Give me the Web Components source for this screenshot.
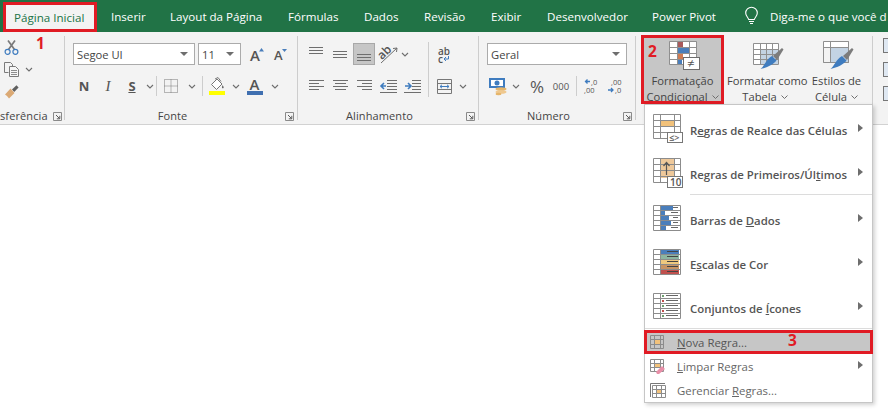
<!DOCTYPE html>
<html lang="pt-BR">
<head>
<meta charset="utf-8">
<title>Formatação Condicional</title>
<style>
html,body{margin:0;padding:0;background:#fff;overflow:hidden;width:888px;height:418px}
body{font-family:"Open Sans","Liberation Sans",sans-serif;font-size:11px;color:#444}
</style>
</head>
<body>
<excel-app></excel-app>
<script>
const svg=(w,h,b)=>`<svg xmlns="http://www.w3.org/2000/svg" width="${w}" height="${h}" viewBox="0 0 ${w} ${h}" style="display:block;overflow:visible">${b}</svg>`;
const lines=(a,c='#6e6e6e')=>`<path fill="none" stroke="${c}" d="${a.map(l=>`M${l[0]} ${l[1]+.5}H${l[2]}`).join('')}"/>`;
const grid=(x,y,w,h,cols,rows,c='#8c8c8c')=>{let d=`M${x+.5} ${y+.5}h${w}v${h}h${-w}z`;cols.forEach(v=>d+=`M${x+v+.5} ${y+.5}v${h}`);rows.forEach(v=>d+=`M${x+.5} ${y+v+.5}h${w}`);return `<path d="${d}" fill="none" stroke="${c}"/>`};
const txt=(x,y,s,t,extra='')=>`<text x="${x}" y="${y}" font-family="'Open Sans',sans-serif" font-size="${s}" fill="#555" ${extra}>${t}</text>`;
const BR='<path d="M20 15L29 7l1.500 1.500L24 19z" fill="#7c7c7c"/><path d="M19 15l4.500 4.500c-3 4-9 7-16 8.500 4-3 5-9 11.500-13z" fill="#3f7cbf"/>';
const ICONS={
 chev:svg(8,5,'<path d="M1 1l3 3 3-3" fill="none" stroke="#6e6e6e" stroke-width="1.1"/>'),
 cut:svg(15,15,'<path d="M4.500 9.500L11 .5M10.500 9.500L4 .5" stroke="#7a7a7a" stroke-width="1.7" fill="none"/><circle cx="3.600" cy="11.800" r="2.500" fill="none" stroke="#3f7cbf" stroke-width="1.2"/><circle cx="11.400" cy="11.800" r="2.500" fill="none" stroke="#3f7cbf" stroke-width="1.2"/>'),
 copy:svg(16,15,'<path d="M.5 .5h6l2 2v1.500M.5 .5v10h4" fill="none" stroke="#7a7a7a"/><path d="M5.500 4.500h6l3 3v7h-9z" fill="#f6f6f6" stroke="#7a7a7a"/>'+lines([[7,8,13],[7,10,13],[7,12,13]],'#8d8d8d')),
 brush:svg(15,15,'<path d="M8 5.500L12.500 1.200 14.600 3.400 10.200 8z" fill="#5f5f5f"/><path d="M1 10.500L6.500 4.500 10.500 9 5 14.500 3 12z" fill="#dba974"/>'),
 aup:svg(14,15,txt(0,14,15,'A','font-weight="600"')+'<path d="M9 4.500L11.500 1 14 4.500z" fill="#4a7ebb"/>'),
 adn:svg(13,13,txt(0,12,13,'A','font-weight="600"')+'<path d="M8 1h5l-2.500 3z" fill="#4a7ebb"/>'),
 border:svg(14,14,'<path d="M.5 .5h13v13H.5zM7 .5v13M.5 7h13" fill="none" stroke="#777" stroke-dasharray="1 1"/>'),
 fill:svg(16,18,'<path d="M2.500 7.500L8 2l5 5-5.500 5.500z" fill="#fff" stroke="#777"/><path d="M6 2l3-1.500 3 4" fill="none" stroke="#777"/><path d="M13.500 8c1 1.500 1.500 2.200 1 3-.8.6-1.800 0-1.500-1z" fill="#666"/><rect x="0" y="14" width="16" height="4" fill="#ffff00"/>'),
 fcolor:svg(16,18,txt(2.500,13,15,'A','font-weight="600"')+'<rect y="14" width="16" height="4" fill="#3f6fb0"/>'),
 atop:svg(14,8,lines([[0,1,14],[0,4,14],[0,7,14]])),
 amid:svg(14,8,lines([[0,1,14],[0,4,14],[0,7,14]])),
 abot:svg(14,8,lines([[0,1,14],[0,4,14],[0,7,14]])),
 orient:svg(20,19,'<g transform="rotate(-45 9 9)">'+txt(1,10,12,'ab','font-weight="600"')+'</g><path d="M3 18L19 3M19 3l-4 .5M19 3l-.5 4" stroke="#6e6e6e" fill="none"/>'),
 left:svg(15,12,lines([[0,0,15],[0,3,10],[0,6,15],[0,9,10]])),
 center:svg(15,12,lines([[0,0,15],[2,3,13],[0,6,15],[2,9,13]])),
 right:svg(15,12,lines([[0,0,15],[5,3,15],[0,6,15],[5,9,15]])),
 outd:svg(17,13,lines([[7,0,17],[7,3,17],[7,6,17],[7,9,17],[0,12,17]])+'<path d="M6 6H1.500M4 3L1 6l3 3" fill="none" stroke="#3f7cbf" stroke-width="1.6"/>'),
 ind:svg(17,13,lines([[8,0,17],[8,3,17],[8,6,17],[8,9,17],[0,12,17]])+'<path d="M1 6h5.500M4 3l3 3-3 3" fill="none" stroke="#3f7cbf" stroke-width="1.6"/>'),
 wraparrow:svg(13,16,'<path d="M12.500 10v3H8M10 11l-2 2 2 2" fill="none" stroke="#3f7cbf"/>'),
 merge:svg(15,15,'<path d="M.5 .5h14v14H.5zM.5 4.500h14M.5 10.500h14" fill="none" stroke="#777"/><path d="M3 7.500h9M5 5.800L3 7.500l2 1.700M10 5.800l2 1.700-2 1.700" fill="none" stroke="#3f7cbf"/>'),
 money:svg(18,17,'<rect x="0" y="0" width="16" height="10" fill="#3f7cbf"/><rect x="2" y="2" width="12" height="6" fill="#fff"/><circle cx="8" cy="5" r="2.500" fill="#3f7cbf"/><ellipse cx="12" cy="11" rx="5.500" ry="1.800" fill="#e5b56a"/><ellipse cx="12" cy="14" rx="5.500" ry="1.800" fill="#efc88e"/><ellipse cx="9.500" cy="16" rx="3" ry="1.200" fill="#e5b56a"/>'),
 incarrow:svg(16,16,'<path d="M6 3.500H1.500M3.500 1.500l-2 2 2 2" fill="none" stroke="#3f7cbf" stroke-width="1.3"/>'),
 decarrow:svg(16,16,'<path d="M0 12h4.500M3 10l2 2-2 2" fill="none" stroke="#3f7cbf" stroke-width="1.3"/>'),
 launcher:svg(9,9,'<path d="M.5 8.500V.5h8v8z" fill="none" stroke="#8a8a8a"/><path d="M3 3l3.500 3.500M6.800 3.800v3h-3" fill="none" stroke="#5a5a5a"/>'),
 bulb:svg(13,18,'<path d="M3.700 12.500C3.300 10.500 .7 9.200 .7 6a5.800 5.800 0 0 1 11.600 0c0 3.200-2.600 4.500-3 6.500z M4 14.500h5M5 16.500h3" fill="none" stroke="#fff" stroke-width="1.1"/>'),
 condfmt:svg(31,29,'<rect x="1" y="1" width="27" height="23" fill="#fff"/><rect x="8" y="1" width="6" height="6" fill="#a9595a"/><rect x="8" y="7" width="12" height="6" fill="#4a7ebb"/><rect x="8" y="13" width="6" height="6" fill="#d07b52"/><rect x="8" y="19" width="5" height="5" fill="#4a7ebb"/>'+grid(0,0,27,23,[8,20],[6,12,18],'#8f8f8f')+'<rect x="14.500" y="16.500" width="16" height="12" fill="#fff" stroke="#6e6e6e"/>'+txt(18,27,13,'≠')),
 tablefmt:svg(31,29,'<rect x="1" y="3" width="25" height="21" fill="#fff"/><rect x="7" y="8" width="19" height="15" fill="#c3d3e3"/>'+grid(0,2,25,21,[7,13,19],[6,11,16],'#8f8f8f')+BR),
 stylefmt:svg(31,29,'<rect x="7" y="7" width="18" height="14" fill="#c3d3e3"/><rect x="1" y="1" width="25" height="5" fill="#fff"/>'+grid(0,0,25,21,[7,25],[6,21],'#8f8f8f')+BR),
 m1:svg(30,29,'<rect x="7" y="6" width="14" height="6" fill="#f2c27b"/>'+grid(0,0,27,24,[7,21],[6,12,18])+'<rect x="14.500" y="18.500" width="15" height="10" fill="#fff" stroke="#777"/>'+txt(16,27,9,'≤&gt;')),
 m2:svg(30,30,'<rect x="7" y="1" width="14" height="19" fill="#eec89a"/>'+grid(0,0,27,24,[7,21],[6,12,18])+'<path d="M13.500 17V5M10.500 8l3-3.500 3 3.500" fill="none" stroke="#555" stroke-width="1.2"/><rect x="14.500" y="18.500" width="15" height="11" fill="#fff" stroke="#777"/>'+txt(17,27.500,10,'10')),
 m3:svg(28,26,'<rect x="7" y="1" width="13" height="5" fill="#4a7ebb"/><rect x="7" y="6" width="5" height="5" fill="#4a7ebb"/><rect x="7" y="11" width="9" height="5" fill="#4a7ebb"/><rect x="7" y="16" width="11" height="5" fill="#4a7ebb"/><rect x="7" y="21" width="6" height="4" fill="#4a7ebb"/>'+grid(0,0,27,25,[7],[5,10,15,20])+lines([[20,2,25],[18,7,25],[20,12,25],[20,17,25],[18,22,25]],'#666')),
 m4:svg(28,26,'<rect x="7" y="1" width="19" height="5" fill="#4a7ebb"/><rect x="7" y="6" width="19" height="5" fill="#8cb5a0"/><rect x="7" y="11" width="19" height="5" fill="#eec87e"/><rect x="7" y="16" width="19" height="4" fill="#c89464"/><rect x="7" y="20" width="19" height="5" fill="#c0504d"/>'+grid(0,0,27,25,[7],[5,10,15,20])+lines([[14,2,25],[14,7,25],[14,12,25],[14,17,25],[14,22,25]],'#444')),
 m5:svg(28,26,grid(0,0,27,25,[7],[5,10,15,20])+lines([[13,2,25],[13,7,25],[13,12,25],[13,17,25],[13,22,25]],'#666')+'<rect x="9" y="2" width="2" height="2" fill="#6fa06f"/><rect x="9" y="7" width="2" height="2" fill="#c0504d"/><rect x="9" y="12" width="2" height="2" fill="#6fa06f"/><rect x="9" y="17" width="2" height="2" fill="#c0504d"/><rect x="9" y="22" width="2" height="2" fill="#6fa06f"/>'),
 s1:svg(14,14,'<rect x="4" y="4" width="6" height="5" fill="#f2c27b"/>'+grid(0,0,13,13,[4,10],[4,9])),
 s2:svg(16,16,'<rect x="4" y="4" width="6" height="5" fill="#f2c27b"/>'+grid(0,0,13,12,[4,10],[4,8])+'<path d="M6 13l6-6 3 3-6 5H7z" fill="#e88fa8"/>'),
 s3:svg(16,15,'<path d="M.5 14V.5H15" fill="none" stroke="#777"/><rect x="6" y="6" width="5" height="4" fill="#f2c27b"/>'+grid(2,2,13,12,[4,9],[4,8]))
};
function el(name,css,html,init){
 customElements.define(name,class extends HTMLElement{
  connectedCallback(){
   if(this.shadowRoot)return;
   const r=this.attachShadow({mode:'open'});
   const a=n=>this.getAttribute(n);
   r.innerHTML=`<style>${css}</style>`+(typeof html==='function'?html(a):html);
   if(init)init(this,a);
  }
 });
}
el('x-row',':host{display:flex;align-items:center;height:22px}','<slot></slot>');
el('x-col',':host{display:flex;flex-direction:column;gap:10px;padding-top:11px}','<slot></slot>');
el('x-sep',':host{display:block;width:1px;height:20px;background:#cdcdcd;flex:none}','');
el('x-tool',`:host{display:flex;align-items:center;justify-content:center;height:22px;flex:none;box-sizing:border-box;font:inherit;color:#555}`,
 a=>`${a('icon')?ICONS[a('icon')]:''}<slot></slot>`,(t,a)=>{if(a('w'))t.style.width=a('w')+'px'});
/* icon whose glyph lines are one wrapped text, with a small arrow drawn over them */
el('x-glyph',`:host{display:block;position:relative;width:16px;height:16px;flex:none;color:#555}
 .t{display:block;white-space:pre;margin:0}
 .o{position:absolute;left:0;top:0}`,
 a=>`<span class="t" style="${a('ts')}">${a('text').replace(/\|/g,'\n')}</span><span class="o">${ICONS[a('icon')]}</span>`);
el('x-combo',`:host{display:flex;align-items:center;justify-content:space-between;box-sizing:border-box;height:22px;background:#fff;border:1px solid #ababab;padding:0 4px 0 3px;font-size:11.2px;color:#444;flex:none}
 i{width:0;height:0;border:4px solid transparent;border-top:4px solid #6e6e6e;border-bottom:0;margin-right:2px}`,
 '<span><slot></slot></span><i></i>',(t,a)=>{t.style.width=a('w')+'px'});
el('x-group',`:host{display:flex;flex-direction:column;box-sizing:border-box;flex:none;height:92px;position:relative}
 .b{flex:1;min-height:0;display:flex}
 .f{height:16px;display:flex;align-items:center;font-size:11px;letter-spacing:.1px;color:#444;line-height:16px}
 .l{flex:1;text-align:center;white-space:nowrap}
 .k{width:18px;display:flex;justify-content:flex-start;padding-left:5px;box-sizing:border-box}
 .r{width:1px;position:absolute;right:0;top:4px;bottom:4px;background:#cdcdcd}`,
 a=>`<div class="b"><slot></slot></div><div class="f"><span class="l">${a('label')||''}</span>${a('nokey')!==null?'':`<span class="k">${ICONS.launcher}</span>`}</div><span class="r"></span>`,
 (t,a)=>{t.style.width=a('w')+'px'});
el('x-big',`:host{display:block;box-sizing:border-box;flex:none;height:69px;margin-top:3px;border:3px solid transparent;text-align:center;font-size:11.2px;line-height:16px;color:#444;white-space:nowrap}
 :host([on]){background:#c6c6c6;border-color:#e01b24}
 .i{height:35px;padding-top:3px;box-sizing:border-box;display:flex;justify-content:center}
 .c{display:inline-block;vertical-align:2px;margin-left:1px}`,
 a=>`<div class="i" style="padding-left:${a('il')||0}px">${ICONS[a('icon')]}</div><div>${a('l1')}</div><div>${a('l2')} <span class="c">${svg(7,4,'<path d="M.5 .5l3 3 3-3" fill="none" stroke="#6e6e6e"/>')}</span></div>`,
 (t,a)=>{t.style.width=a('w')+'px'});
el('x-tab',`:host{display:flex;align-items:center;box-sizing:border-box;flex:none;padding-left:14px;color:#fff;font-size:11.6px;white-space:nowrap;height:32px}
 :host([on]){background:#f3f3f3;color:#217346;border:3px solid #e01b24;height:30px;margin-top:2px;padding-left:8px}`,
 '<slot></slot>',(t,a)=>{t.style.width=a('w')+'px'});
el('x-item',`:host{display:flex;align-items:center;box-sizing:border-box;height:44px;position:relative;font-size:11.4px;color:#555;font-weight:600}
 .i{position:absolute;left:8px;top:var(--t,6px)}
 .t{margin-left:45px;flex:1;white-space:nowrap}
 .a{width:0;height:0;border:4px solid transparent;border-left:5px solid #6e6e6e;border-right:0;margin:-5px 9px 0 0}`,
 a=>`<span class="i">${ICONS[a('icon')]}</span><span class="t"><slot></slot></span><span class="a"></span>`,
 (t,a)=>{if(a('t'))t.style.setProperty('--t',a('t')+'px')});
el('x-small',`:host{display:flex;align-items:center;box-sizing:border-box;height:24px;position:relative;font-size:11.4px;color:#666}
 :host([on]){background:#c6c6c6;border:3px solid #e01b24;margin:0 -1px;color:#555}
 .i{position:absolute;left:5px;top:5px}
 :host([on]) .i{left:3px;top:2px}
 .t{margin-left:32px;flex:1;white-space:nowrap}
 :host([on]) .t{margin-left:30px}
 .a{width:0;height:0;border:4px solid transparent;border-left:5px solid #6e6e6e;border-right:0;margin:-2px 9px 0 0}`,
 a=>`<span class="i">${ICONS[a('icon')]}</span><span class="t"><slot></slot></span>${a('arrow')!==null?'<span class="a"></span>':''}`);
el('x-menu',`:host{display:block;position:absolute;left:644px;top:104px;width:229px;height:299px;box-sizing:border-box;background:#fff;border:1px solid #c6c6c6;padding-top:3px;box-shadow:2px 2px 4px rgba(0,0,0,.18)}`,'<slot></slot>');
el('x-mark',`:host{position:absolute;color:#e01b24;font:700 15.5px/16px "Open Sans",sans-serif;z-index:3}`,'<slot></slot>');
el('x-msep',`:host{display:block;height:1px;background:#dcdcdc}`,'');
el('x-tabs',`:host{display:flex;height:32px;background:#217346;padding-left:3px;overflow:hidden}`,'<slot></slot>');
el('x-ribbon',`:host{display:flex;height:93px;background:#f3f3f3;border-bottom:1px solid #d2d2d2;box-sizing:border-box;overflow:hidden;position:relative}`,'<slot></slot>');
el('x-stack',`:host{display:flex;flex-direction:column;padding:7px 0 0 4px;gap:6px}`,'<slot></slot>');
el('excel-app',`:host{display:block;position:relative;width:888px;height:418px;overflow:hidden;font-family:"Open Sans","Liberation Sans",sans-serif;background:#fff}
 .n{font-weight:700;font-size:13px}.s{font-size:13px;text-decoration:underline;font-weight:700}.it{font-style:italic;font-family:"Liberation Serif",serif;font-size:15px}
 .pc{font-size:17px;color:#555}.th{font-size:9.5px;color:#555}.ov{display:flex;flex-direction:column;gap:9px;padding:6px 0 0 10px}
 .ov b{display:block;width:14px;height:13px;border:1px solid #777;background:#dfe8f2}`,`
<x-tabs>
 <x-tab on w="94">Página Inicial</x-tab><x-tab w="59">Inserir</x-tab><x-tab w="118">Layout da Página</x-tab><x-tab w="76">Fórmulas</x-tab><x-tab w="60">Dados</x-tab><x-tab w="67">Revisão</x-tab><x-tab w="56">Exibir</x-tab><x-tab w="105">Desenvolvedor</x-tab><x-tab w="107">Power Pivot</x-tab>
 <x-tool w="12" icon="bulb" style="height:32px;margin-right:13px"></x-tool>
 <x-tab w="118" style="padding-left:0">Diga-me o que você d</x-tab>
</x-tabs>
<x-ribbon>
 <x-group w="65" label="sferência">
  <x-stack>
   <x-row style="height:16px"><x-tool w="15" icon="cut" style="height:16px"></x-tool></x-row>
   <x-row style="height:16px"><x-tool w="16" icon="copy" style="height:16px"></x-tool><x-tool w="18" icon="chev" style="height:16px"></x-tool></x-row>
   <x-row style="height:16px"><x-tool w="15" icon="brush" style="height:16px"></x-tool></x-row>
  </x-stack>
 </x-group>
 <x-group w="233" label="Fonte">
  <x-col style="padding-left:8px">
   <x-row><x-combo w="122">Segoe UI</x-combo><x-combo w="43" style="margin-left:3px">11</x-combo><x-tool w="22" icon="aup" style="margin-left:5px"></x-tool><x-tool w="22" icon="adn" style="margin-left:1px"></x-tool></x-row>
   <x-row>
    <x-tool w="22"><span class="n">N</span></x-tool><x-tool w="24" style="margin-left:1px"><span class="it">I</span></x-tool><x-tool w="24"><span class="s">S</span></x-tool><x-tool w="12" icon="chev"></x-tool>
    <x-sep></x-sep><x-tool w="20" icon="border" style="margin-left:4px"></x-tool><x-tool w="18" icon="chev" style="margin-left:2px"></x-tool>
    <x-sep style="margin-left:1px"></x-sep><x-tool w="28" icon="fill"></x-tool><x-tool w="8" icon="chev" style="margin-left:1px"></x-tool><x-tool w="30" icon="fcolor"></x-tool><x-tool w="8" icon="chev" style="margin-left:1px"></x-tool>
   </x-row>
  </x-col>
 </x-group>
 <x-group w="181" label="Alinhamento">
  <x-col style="padding-left:6px;box-sizing:border-box;width:130px">
   <x-row><x-tool w="24" icon="atop" style="padding-bottom:9px"></x-tool><x-tool w="24" icon="amid"></x-tool><x-tool w="22" icon="abot" style="margin-left:1px;background:#c6c6c6;border:1px solid #a8a8a8;padding-top:5px"></x-tool><x-tool w="25" icon="orient"></x-tool><x-tool w="8" icon="chev" style="margin-left:1px"></x-tool></x-row>
   <x-row><x-tool w="24" icon="left"></x-tool><x-tool w="24" icon="center"></x-tool><x-tool w="24" icon="right"></x-tool><x-tool w="24" icon="outd"></x-tool><x-tool w="24" icon="ind"></x-tool></x-row>
  </x-col>
  <x-sep style="height:55px;margin-top:10px"></x-sep>
  <x-col>
   <x-row><x-tool w="30"><x-glyph icon="wraparrow" text="ab|c" ts="font-size:10px;font-weight:600;line-height:8px;padding:1px 0 0 2px"></x-glyph></x-tool></x-row>
   <x-row><x-tool w="30" icon="merge"></x-tool><x-tool w="8" icon="chev"></x-tool></x-row>
  </x-col>
 </x-group>
 <x-group w="157" label="Número">
  <x-col style="padding-left:8px">
   <x-row><x-combo w="140">Geral</x-combo></x-row>
   <x-row><x-tool w="21" icon="money"></x-tool><x-tool w="16" icon="chev"></x-tool><x-tool w="26"><span class="pc">%</span></x-tool><x-tool w="22"><span class="th">000</span></x-tool><x-sep style="margin-left:4px"></x-sep><x-tool w="30"><x-glyph icon="incarrow" text=",0|,00" ts="font-size:7.5px;line-height:8px;padding-left:0;text-indent:7px"></x-glyph></x-tool><x-tool w="18"><x-glyph icon="decarrow" text=",00|,0" ts="font-size:7.5px;line-height:8px;padding-left:7px;text-indent:-4px"></x-glyph></x-tool></x-row>
  </x-col>
 </x-group>
 <x-group w="237" label="" nokey>
  <x-row style="height:76px;padding-left:5px;align-items:flex-start">
   <x-big on w="83" icon="condfmt" il="3" l1="Formatação" l2="Condicional"></x-big>
   <x-big w="82" icon="tablefmt" il="6" l1="Formatar como" l2="Tabela"></x-big>
   <x-big w="61" icon="stylefmt" il="4" l1="Estilos de" l2="Célula"></x-big>
  </x-row>
 </x-group>
 <div class="ov"><b></b><b></b><b></b></div>
</x-ribbon>
<x-mark style="left:36px;top:35px">1</x-mark>
<x-mark style="left:648px;top:43px">2</x-mark>
<x-menu>
 <x-item icon="m1">R<u>e</u>gras de Realce das Células</x-item>
 <x-item icon="m2">Regras de Primeiros/Úl<u>t</u>imos</x-item>
 <x-msep style="margin:-2px 0 3px 45px"></x-msep>
 <x-item icon="m3" t="7">Barras de <u>D</u>ados</x-item>
 <x-item icon="m4" t="7">E<u>s</u>calas de Cor</x-item>
 <x-item icon="m5" t="7">Conjuntos de <u>Í</u>cones</x-item>
 <x-msep style="margin:-2px 0 1px 0"></x-msep>
 <x-small on icon="s1"><u>N</u>ova Regra...</x-small>
 <x-small arrow icon="s2"><u>L</u>impar Regras</x-small>
 <x-small icon="s3">Gerenciar <u>R</u>egras...</x-small>
</x-menu>
<x-mark style="left:788px;top:332px">3</x-mark>
`);
</script>
</body>
</html>
